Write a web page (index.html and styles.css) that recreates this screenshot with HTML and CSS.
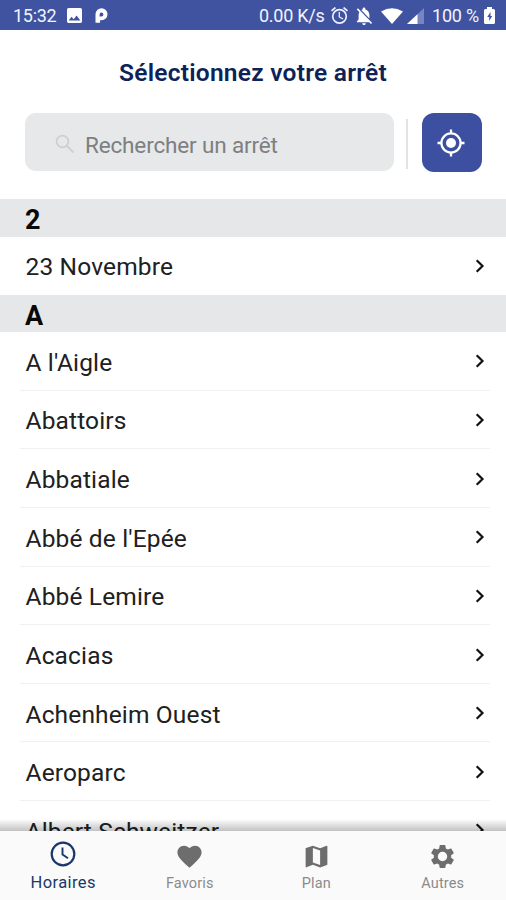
FILE: index.html
```html
<!DOCTYPE html>
<html lang="fr">
<head>
<meta charset="utf-8">
<title>Sélectionnez votre arrêt</title>
<link rel="stylesheet" href="styles.css">
</head>
<body>
<svg width="0" height="0" class="defs"><symbol id="chev" viewBox="0 0 10 16"><path d="M1.7 2.2 7.500 8l-5.800 5.800" fill="none" stroke="#111" stroke-width="2.2"/></symbol></svg>
<div class="app">
<header class="status">
  <span class="time">15:32</span>
  <svg class="picture" viewBox="3 3 18 18"><path fill="#fff" d="M21 19V5c0-1.100-.9-2-2-2H5c-1.100 0-2 .9-2 2v14c0 1.100.9 2 2 2h14c1.100 0 2-.9 2-2zM8.500 13.500l2.500 3.010L14.500 12l4.500 6H5l3.500-4.500z"/></svg>
  <svg class="parking" viewBox="0 0 13 15"><path fill="#fff" fill-rule="evenodd" d="M.5 14.800V6.300a6 6 0 1 1 6 6H5v2.500zM6.500 4.600a1.900 1.900 0 0 0-1.900 1.900v1.900h1.900a1.900 1.900 0 0 0 0-3.800z"/></svg>
  <span class="speed">0.00 K/s</span>
  <svg class="alarm" viewBox="2 2 20 20"><path fill="#eef1ff" d="M22 5.720l-4.600-3.860-1.290 1.530 4.600 3.860L22 5.720zM7.880 3.390 6.600 1.860 2 5.710l1.290 1.530 4.590-3.850zM12.500 8H11v6l4.750 2.850.75-1.230-4-2.370V8zM12 4a9 9 0 1 0 0 18 9 9 0 0 0 0-18zm0 16a7 7 0 1 1 0-14 7 7 0 0 1 0 14z"/></svg>
  <svg class="bell" viewBox="3 2 18 20"><path fill="#fff" d="M20 18.690 7.840 6.140 5.270 3.490 4 4.760l2.800 2.800v.01c-.52.99-.8 2.160-.8 3.420v5l-2 2v1h13.730l2 2L21 19.720l-1-1.030zM12 22c1.110 0 2-.89 2-2h-4c0 1.110.89 2 2 2zm6-7.320V11c0-3.080-1.640-5.640-4.500-6.320V4a1.500 1.500 0 0 0-3 0v.68c-.54.13-1.030.34-1.480.62L18 14.680z"/></svg>
  <svg class="wifi" viewBox="0 0 22 16"><path fill="#fff" d="M0 3.500Q11-3.200 22 3.500L11 16z"/></svg>
  <svg class="signal" viewBox="0 0 17 16"><path fill="#7785c2" d="M17 0v16H0z"/><path fill="#fff" d="M10.500 6.200V16H0z"/></svg>
  <span class="percent">100 %</span>
  <svg class="battery" viewBox="0 0 11 17"><path fill="#fff" d="M3 2V0h5v2h1.500Q11 2 11 3.500v12Q11 17 9.500 17h-8Q0 17 0 15.500v-12Q0 2 1.500 2z"/><path fill="#4053a0" d="M6.500 5 3.200 10h2v4l3-5H6.500z"/></svg>
</header>
<h1>Sélectionnez votre arrêt</h1>
<div class="tools">
  <div class="search"><svg viewBox="0 0 20 20"><circle cx="7.500" cy="7.500" r="5.900"/><path d="m12 12 6.500 6.500"/></svg><span>Rechercher un arrêt</span></div>
  <i class="rule"></i>
  <button class="locate" aria-label="Me localiser"><svg viewBox="0 0 28 28"><circle cx="14" cy="14" r="9.600" fill="none" stroke="#fff" stroke-width="2.300"/><circle cx="14" cy="14" r="5" fill="#fff"/><path d="M14 .5v4M14 23.500v4M.5 14h4M23.500 14h4" stroke="#fff" stroke-width="2.300"/></svg></button>
</div>
<main>
  <h2>2</h2>
  <div class="row"><span>23 Novembre</span><svg><use href="#chev"/></svg></div>
  <h2>A</h2>
  <div class="row"><span>A l'Aigle</span><svg><use href="#chev"/></svg></div>
  <div class="row"><span>Abattoirs</span><svg><use href="#chev"/></svg></div>
  <div class="row"><span>Abbatiale</span><svg><use href="#chev"/></svg></div>
  <div class="row"><span>Abbé de l'Epée</span><svg><use href="#chev"/></svg></div>
  <div class="row"><span>Abbé Lemire</span><svg><use href="#chev"/></svg></div>
  <div class="row"><span>Acacias</span><svg><use href="#chev"/></svg></div>
  <div class="row"><span>Achenheim Ouest</span><svg><use href="#chev"/></svg></div>
  <div class="row"><span>Aeroparc</span><svg><use href="#chev"/></svg></div>
  <div class="row"><span>Albert Schweitzer</span><svg><use href="#chev"/></svg></div>
</main>
<nav>
  <a class="active"><svg viewBox="0 0 26 26"><circle cx="13" cy="13" r="11.300" fill="none" stroke="#193867" stroke-width="2.200"/><path d="M12.500 6.500v7l5.500 3.800" fill="none" stroke="#193867" stroke-width="1.900"/></svg><span>Horaires</span></a>
  <a><svg viewBox="0 0 24 24"><path d="m12 21.350-1.450-1.320C5.400 15.360 2 12.280 2 8.500 2 5.420 4.420 3 7.500 3c1.740 0 3.410.81 4.500 2.090C13.090 3.810 14.760 3 16.500 3 19.580 3 22 5.420 22 8.500c0 3.780-3.400 6.860-8.550 11.540L12 21.350z"/></svg><span>Favoris</span></a>
  <a><svg viewBox="0 0 24 24"><path d="m20.500 3-.16.030L15 5.100 9 3 3.360 4.900c-.21.070-.36.250-.36.480V20.500c0 .28.220.5.500.5l.16-.03L9 18.900l6 2.100 5.640-1.900c.21-.07.36-.25.36-.48V3.500c0-.28-.22-.5-.5-.5zM15 19l-6-2.110V5l6 2.110V19z"/></svg><span>Plan</span></a>
  <a><svg viewBox="0 0 24 24"><path d="M19.140 12.940c.04-.3.060-.61.060-.94 0-.32-.02-.64-.07-.94l2.030-1.580c.18-.14.230-.41.120-.61l-1.920-3.320c-.12-.22-.37-.29-.59-.22l-2.390.96c-.5-.38-1.030-.7-1.620-.94l-.36-2.540c-.04-.24-.24-.41-.48-.41h-3.840c-.24 0-.43.170-.47.410l-.36 2.540c-.59.240-1.130.57-1.620.94l-2.390-.96c-.22-.08-.47 0-.59.220L2.740 8.870c-.12.210-.08.470.12.610l2.030 1.580c-.05.3-.09.630-.09.940s.02.640.07.940l-2.030 1.580c-.18.140-.23.410-.12.610l1.920 3.320c.12.220.37.290.59.220l2.390-.96c.5.380 1.030.7 1.620.94l.36 2.540c.05.240.24.410.48.410h3.840c.24 0 .44-.17.470-.41l.36-2.540c.59-.24 1.130-.56 1.620-.94l2.390.96c.22.080.47 0 .59-.22l1.920-3.320c.12-.22.070-.47-.12-.61l-2.010-1.580zM12 15.900A3.900 3.900 0 1 1 12 8.100a3.900 3.900 0 0 1 0 7.800z"/></svg><span>Autres</span></a>
</nav>
</div>
</body>
</html>
```
FILE: styles.css
```css
* { box-sizing: border-box; }
body { margin: 0; background: #fff; font-family: Roboto, "Liberation Sans", sans-serif; }
.defs { display: none; }
svg { display: block; flex: none; }
.app { width: 506px; height: 900px; display: flex; flex-direction: column; overflow: hidden; }
.status { height: 30px; flex: none; background: #4053a0; color: #f2f4ff; display: flex; align-items: center; padding: 1px 11px 0 13px; font-size: 18px; white-space: nowrap; }
.time { width: 54px; letter-spacing: -.3px; }
.picture { width: 15px; height: 15px; }
.parking { width: 13px; height: 15px; margin-left: 13px; }
.speed { margin-left: auto; width: 72px; letter-spacing: -.25px; }
.alarm { width: 17px; height: 17px; }
.bell { width: 18px; height: 18px; margin-left: 7px; }
.wifi { width: 22px; height: 16px; margin-left: 8px; }
.signal { width: 17px; height: 16px; margin-left: 4px; }
.percent { width: 52px; margin-left: 8px; letter-spacing: -.2px; }
.battery { width: 11px; height: 17px; }
h1 { margin: 0; height: 83px; line-height: 86px; flex: none; text-align: center; color: #0d2357; font-size: 24.5px; font-weight: 600; letter-spacing: .25px; }
.tools { height: 86px; flex: none; padding: 0 24px 0 25px; display: flex; }
.search { width: 369px; height: 58px; background: #e6e8e9; border-radius: 11px; display: flex; align-items: center; padding: 5px 0 0 29px; color: #7d7f81; font-size: 22.5px; letter-spacing: -.15px; }
.search svg { width: 20px; height: 20px; margin: -1px 10px 0 1px; fill: none; stroke: #cdcfd0; stroke-width: 1.8; }
.rule { width: 2px; height: 50px; margin: 6px 0 0 12px; background: #e1e3e4; }
.locate { width: 60px; height: 59px; margin-left: 14px; padding: 0; border: 0; border-radius: 12px; background: #3c4fa0; display: grid; place-items: center; }
.locate svg { width: 28px; height: 28px; margin: 1px 2px 0 0; }
main { flex: 1; min-height: 0; overflow: hidden; }
h2 { margin: 0; height: 37.5px; padding-left: 25px; background: #e6e7e8; color: #080808; font-size: 27px; line-height: 42.5px; font-weight: 700; }
.row { height: 58.65px; margin: 0 16px 0 20px; padding: 3px 5px 0 5.5px; border-bottom: 1.5px solid #f0f1f1; display: flex; align-items: center; justify-content: space-between; font-size: 24.5px; letter-spacing: .15px; color: #202020; }
.row:has(+ h2) { height: 58px; padding-top: 2px; border: 0; }
.row svg { width: 10px; height: 16px; margin-top: -2px; }
nav { height: 69px; flex: none; position: relative; background: #fafafa; display: grid; grid-template-columns: repeat(4, 1fr); }
nav::before { content: ""; position: absolute; left: 0; right: 0; bottom: 100%; height: 12px; background: linear-gradient(#0000, #0000003d); }
nav a { display: flex; flex-direction: column; align-items: center; color: #8b8b8b; font-size: 14.5px; letter-spacing: .15px; }
nav svg { width: 29px; height: 29px; margin-top: 10.5px; fill: #6d6d6d; }
nav span { line-height: 18px; margin-top: 4.5px; }
nav .active { color: #193867; font-size: 16.5px; letter-spacing: .4px; }
nav .active svg { width: 26px; height: 26px; margin-top: 10px; }
nav .active span { margin-top: 7px; }
```
